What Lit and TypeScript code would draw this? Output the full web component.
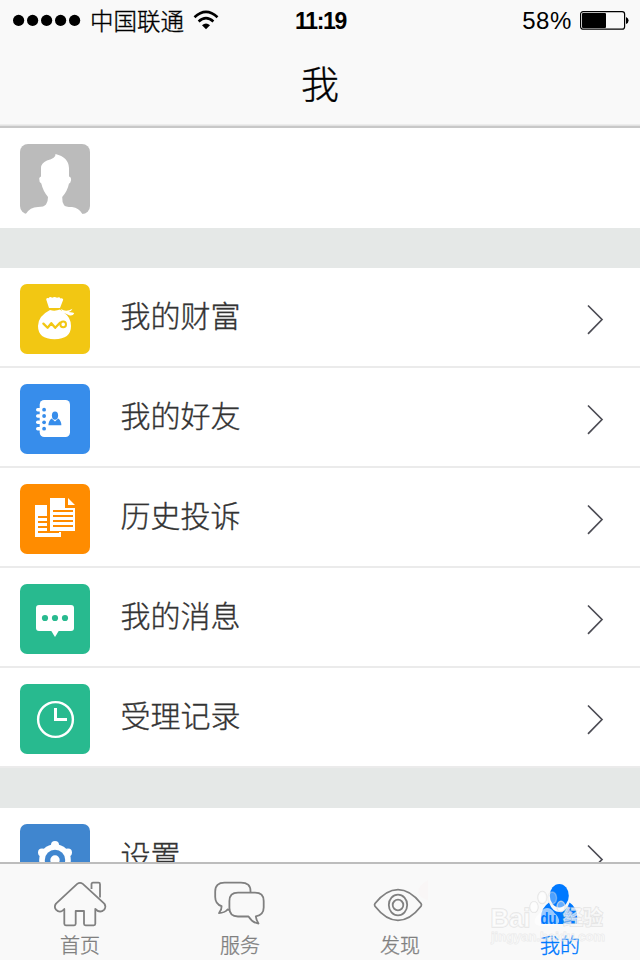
import { LitElement, html, css, svg, TemplateResult } from "lit";
import { customElement } from "lit/decorators.js";

interface Item {
  label: string;
  color: string;
  icon: TemplateResult;
}

const bag = svg`
  <path fill="#fff" d="M29 24 L26.2 15.5 Q26.5 13.5 28.5 14.2 Q30 12.2 32.2 13.8 Q34.5 12 37 13.8 Q39.5 12.6 40.5 14.4 Q43 13.6 43.2 15.8 L40 24 Z"/>
  <path fill="#fff" d="M30 26 Q35 27.5 40 25.5 L43 28 Q51 33 51 42 Q51 55.2 34.5 55.2 Q18 55.2 18 42 Q18 32 30 26 Z"/>
  <path fill="#fff" d="M41 25 Q46 28.5 52.5 24.8 Q51.5 27 48.7 28 Q53 28 54.2 29.5 Q52.5 32.5 48.6 31 Q46.5 29.6 42.5 29 Z"/>
  <path fill="none" stroke="#f2c713" stroke-width="2.3" stroke-linecap="round" stroke-linejoin="round" d="M23.4 39.6 L27.6 43.8 L31.3 39.2 L35.2 43.8 L40 38.8"/>
  <circle cx="43.2" cy="40.4" r="2.8" fill="none" stroke="#f2c713" stroke-width="2"/>`;

const book = svg`
  <rect x="19.7" y="16" width="30.3" height="37" rx="4.5" fill="#fff"/>
  ${[25.7, 32, 38.3, 44.7].map(
    (y) => svg`<rect x="16" y=${y - 1.7} width="7" height="3.4" rx="1.7" fill="#fff"/><circle cx="24.1" cy=${y} r="1.9" fill="#378deb"/>`
  )}
  <ellipse cx="35" cy="31.6" rx="3.1" ry="4.2" fill="#378deb"/>
  <path fill="#378deb" d="M31.6 34.4 L35 37.4 L38.2 34.4 Q41.4 36.8 41.4 41.2 H28.4 Q28.4 36.8 31.6 34.4 Z"/>`;

const docs = svg`
  <path fill="#fff" d="M15 21 H27 V48 H41 V53 H15 Z"/>
  <path fill="#ff8c00" d="M18 32H27V34H18Z M18 37H27V39H18Z M18 42H27V44H18Z M18 47H39V49H18Z"/>
  <path fill="#fff" d="M30 14 H45 V24 H55 V47 H30 Z M48 14 L55 21 H48 Z"/>
  <path fill="#ff8c00" d="M33 26H53V28H33Z M33 31H53V33H33Z M33 36H53V38H33Z M33 41H53V43H33Z"/>`;

const message = svg`
  <rect x="16" y="21" width="38" height="26" rx="3" fill="#fff"/>
  <path fill="#fff" d="M31 46.5 L35 53 L39 46.5 Z"/>
  ${[25, 35, 45].map((x) => svg`<circle cx=${x} cy="34" r="3.1" fill="#28ba8f"/>`)}`;

const clock = svg`
  <circle cx="35.5" cy="35.5" r="17.4" fill="none" stroke="#fff" stroke-width="2.4"/>
  <path d="M35.5 24 V35.5 H47" fill="none" stroke="#fff" stroke-width="3"/>`;

const gear = svg`
  <circle cx="35" cy="36" r="15.8" fill="#fff"/>
  ${[0, 1, 2, 3, 4, 5].map((i) => {
    const a = ((i * 60 - 90) * Math.PI) / 180;
    return svg`<circle cx=${35 + 15 * Math.cos(a)} cy=${36 + 15 * Math.sin(a)} r="4" fill="#fff"/>`;
  })}
  <circle cx="35" cy="36" r="10.2" fill="#4086cf"/>
  <circle cx="35" cy="36" r="4.7" fill="#fff"/>`;

const items: Item[] = [
  { label: "我的财富", color: "#f2c713", icon: bag },
  { label: "我的好友", color: "#378deb", icon: book },
  { label: "历史投诉", color: "#ff8c00", icon: docs },
  { label: "我的消息", color: "#28ba8f", icon: message },
  { label: "受理记录", color: "#28ba8f", icon: clock },
];
const settings: Item = { label: "设置", color: "#4086cf", icon: gear };

const tabs = [
  {
    label: "首页",
    icon: svg`<path d="M41.5 11 V6.2 Q41.5 4.7 43 4.7 H48.5 Q50 4.7 50 6.2 V19.6"/>
      <path d="M27.2 5.9 Q30 3.8 32.8 5.9 L54.3 25.6 Q56.4 28.8 54.3 31.6 Q50 35.8 45.3 31 V45.8 Q45.3 47.3 43.8 47.3 H35.5 Q34 47.3 34 45.8 V33 H25.7 V45.8 Q25.7 47.3 24.2 47.3 H15.8 Q14.3 47.3 14.3 45.8 V31 Q10 35.8 6 31.6 Q3.7 28.8 6 25.6 Z"/>`,
  },
  {
    label: "服务",
    icon: svg`<path d="M40.5 14.5 V13 Q40.5 4.7 31 4.7 H14.5 Q5.2 4.7 5.2 13.5 V19 Q5.2 26 11.6 28.2 Q11.8 32 9 35 Q14.5 35 17.5 31.5 L20 31.8"/>
      <path d="M28 14.7 H45 Q53.7 14.7 53.7 23 V29.5 Q53.7 37 45.8 38.4 Q46.2 42 48.5 45.5 Q42.5 44.8 38.5 38.5 H28 Q19.4 38.5 19.4 30 V23 Q19.4 14.7 28 14.7 Z"/>`,
  },
  {
    label: "发现",
    icon: svg`<path d="M5 25.5 Q16 11.6 28 11.6 Q40 11.6 51 25.5 Q51.9 26.8 51 28.2 Q40 42.3 28 42.3 Q16 42.3 5 28.2 Q4.1 26.8 5 25.5 Z"/>
      <ellipse cx="28" cy="27" rx="9.2" ry="10.3"/><circle cx="28" cy="27" r="5.3"/>
      <path d="M58 2 Q48 8 48 14 Q49 20 58 22 Z" fill="#f9f6f6" stroke="none"/>`,
  },
  {
    label: "我的",
    icon: svg`<g fill="#0079ff" stroke="none"><path d="M19 24.5 Q22.5 34 29.4 34 Q36.2 34 39.6 24.5 Q47 29.5 47.2 39 V46 H11 V39 Q11.6 29.5 19 24.5 Z"/>
      <ellipse cx="29.3" cy="18" rx="10.6" ry="13" fill="#f9f9f9"/>
      <ellipse cx="29.3" cy="17.7" rx="9.5" ry="11.8"/></g>`,
  },
];

@customElement("app-root")
export class AppRoot extends LitElement {
  static styles = css`
    :host {
      display: flex;
      flex-direction: column;
      width: 640px;
      height: 960px;
      overflow: hidden;
      position: relative;
      background: #fff;
      font-family: "Liberation Sans", "Noto Sans CJK SC", sans-serif;
    }
    svg { display: block; flex: none; }
    .cjk { font-family: "Noto Sans CJK SC", sans-serif; font-weight: 300; -webkit-text-stroke: 0.35px currentColor; }
    .head {
      box-sizing: border-box;
      flex: none;
      height: 128px;
      background: #f9f9f9;
      border-bottom: 2px solid #c8c8c8;
      box-shadow: inset 0 -1.5px 0 #e2e2e2;
    }
    .status {
      display: grid;
      grid-template-columns: 1fr auto 1fr;
      align-items: center;
      height: 40px;
      padding: 0 11px 0 12px;
      color: #000;
    }
    .left, .right { display: flex; align-items: center; }
    .right { justify-content: flex-end; gap: 7px; }
    .carrier { font-size: 23.5px; line-height: 40px; height: 40px; margin: 0 9px 0 8px; }
    .time { font: bold 23px/40px "Liberation Sans", sans-serif; letter-spacing: -1.3px; height: 38px; }
    .percent { font: 24px/40px "Liberation Sans", sans-serif; letter-spacing: 0.6px; height: 38px; }
    .title { text-align: center; font-size: 38px; line-height: 84px; height: 86px; color: #000; }
    .list { flex: 1; min-height: 0; overflow: hidden; }
    .profile { display: flex; align-items: center; height: 100px; padding: 2px 20px 0; box-sizing: border-box; }
    .gap { height: 40px; background: #e5e8e7; }
    .row {
      display: flex;
      align-items: flex-start;
      box-sizing: border-box;
      height: 100px;
      padding: 16px 36px 0 20px;
      border-bottom: 2px solid #ebebeb;
    }
    .label { flex: 1; margin-left: 30.5px; font-size: 30px; line-height: 61px; color: #333; }
    .chevron { margin-top: 20px; }
    .tabs {
      flex: none;
      display: flex;
      box-sizing: border-box;
      height: 98px;
      background: #f9f9f9;
      border-top: 2px solid #bdbdbd;
    }
    .tab { flex: 1; display: flex; flex-direction: column; align-items: center; padding-top: 14px; color: #808080; }
    .tab svg { fill: none; stroke: #808080; stroke-width: 1.8; stroke-linejoin: round; }
    .tab:last-child { color: #0079ff; }
    .tab-label { font-size: 20px; line-height: 30px; margin-top: 2px; }
    .mark { position: absolute; left: 484px; top: 884px; }
    .mark text { font-family: "Liberation Sans", "Noto Sans CJK SC", sans-serif; font-weight: bold; }
  `;

  private row(item: Item) {
    return html`<div class="row">
      <svg width="70" height="70"><rect width="70" height="70" rx="7" fill=${item.color} />${item.icon}</svg>
      <div class="label cjk">${item.label}</div>
      <svg class="chevron" width="18" height="32">
        <path d="M2 1.5 L16 15.5 L2 29.8" fill="none" stroke="#4d4d55" stroke-width="1.7" />
      </svg>
    </div>`;
  }

  render() {
    return html`
      <header class="head">
        <div class="status">
          <div class="left">
            <svg width="70" height="14">
              ${[0, 1, 2, 3, 4].map((i) => svg`<circle cx=${6.6 + i * 14} cy="7.4" r="5.6"/>`)}
            </svg>
            <span class="carrier cjk">中国联通</span>
            <svg width="26" height="20">
              <g fill="none" stroke="#000" stroke-width="2.6">
                <path d="M1.5 7.2 Q13 -3.4 24.5 7.2" /><path d="M5.6 11.5 Q13 4.8 20.4 11.5" />
              </g>
              <path d="M9 15.2 Q13 11.6 17 15.2 L13 19.2 Z" />
            </svg>
          </div>
          <span class="time">11:19</span>
          <div class="right">
            <span class="percent">58%</span>
            <svg width="50" height="20">
              <rect x="1.6" y="1.6" width="44" height="17.6" rx="2.5" fill="none" stroke="#000" stroke-width="1.2" />
              <rect x="3" y="3" width="24" height="15" rx="1" />
              <path d="M47 7 Q49.6 8 49.6 10.5 Q49.6 13 47 14 Z" />
            </svg>
          </div>
        </div>
        <div class="title cjk">我</div>
      </header>
      <main class="list">
        <div class="profile">
          <svg width="70" height="70">
            <rect width="70" height="70" rx="8" fill="#bbb" />
            <path
              fill="#fff"
              d="M5.8 70 Q10 63 18 63 Q24 63 26 60.5 Q28 58 28 53 Q23 47 21.3 39.5 Q19 38 19.2 34.5 Q19.5 33 21 32.5 V24 Q21 19 27 16.5 Q36 14 35.5 10 Q48.5 13 49 24 V32.5 Q51.5 33 51 36.5 Q50.5 39 49 39.5 Q47.5 47 42.2 53 Q42 58 44 61 Q45 63 52 63 Q59 64 62.5 70 Z"
            />
          </svg>
        </div>
        <div class="gap"></div>
        ${items.map((i) => this.row(i))}
        <div class="gap"></div>
        ${this.row(settings)}
      </main>
      <nav class="tabs">
        ${tabs.map(
          (t) => html`<div class="tab">
            <svg width="60" height="50">${t.icon}</svg>
            <span class="tab-label cjk">${t.label}</span>
          </div>`
        )}
      </nav>
      <svg class="mark" width="130" height="66">
        <g fill="#fff" fill-opacity=".6" stroke="#dcdcdc" stroke-opacity=".7" stroke-width="1.4" paint-order="stroke">
          <ellipse cx="50" cy="23" rx="4" ry="5.4" />
          <ellipse cx="58.3" cy="13.5" rx="4.3" ry="6" />
          <ellipse cx="68.3" cy="14" rx="4.3" ry="6" fill-opacity=".3" stroke-opacity=".4" />
          <ellipse cx="77" cy="22.5" rx="4" ry="5.2" fill-opacity=".4" />
          <path stroke="none" d="M63 24 Q67.5 24 70.5 29 Q75.5 33 75 38 Q74 42.5 63 41.5 Q52 43 50.5 38.5 Q50 34 54.5 30.5 Q58.5 24 63 24 Z" />
          <text x="6.5" y="42.5" font-size="25.5" textLength="40" lengthAdjust="spacingAndGlyphs">Bai</text>
          <text x="79" y="41" font-size="20" textLength="40" lengthAdjust="spacingAndGlyphs">经验</text>
          <text x="7" y="57" font-size="12.5" textLength="114" lengthAdjust="spacingAndGlyphs" stroke-width=".9" fill-opacity=".35" stroke-opacity=".5">jingyan.baidu.com</text>
        </g>
        <text x="56.5" y="40" font-size="16" textLength="16" lengthAdjust="spacingAndGlyphs" fill="#0079ff">du</text>
      </svg>
    `;
  }
}
